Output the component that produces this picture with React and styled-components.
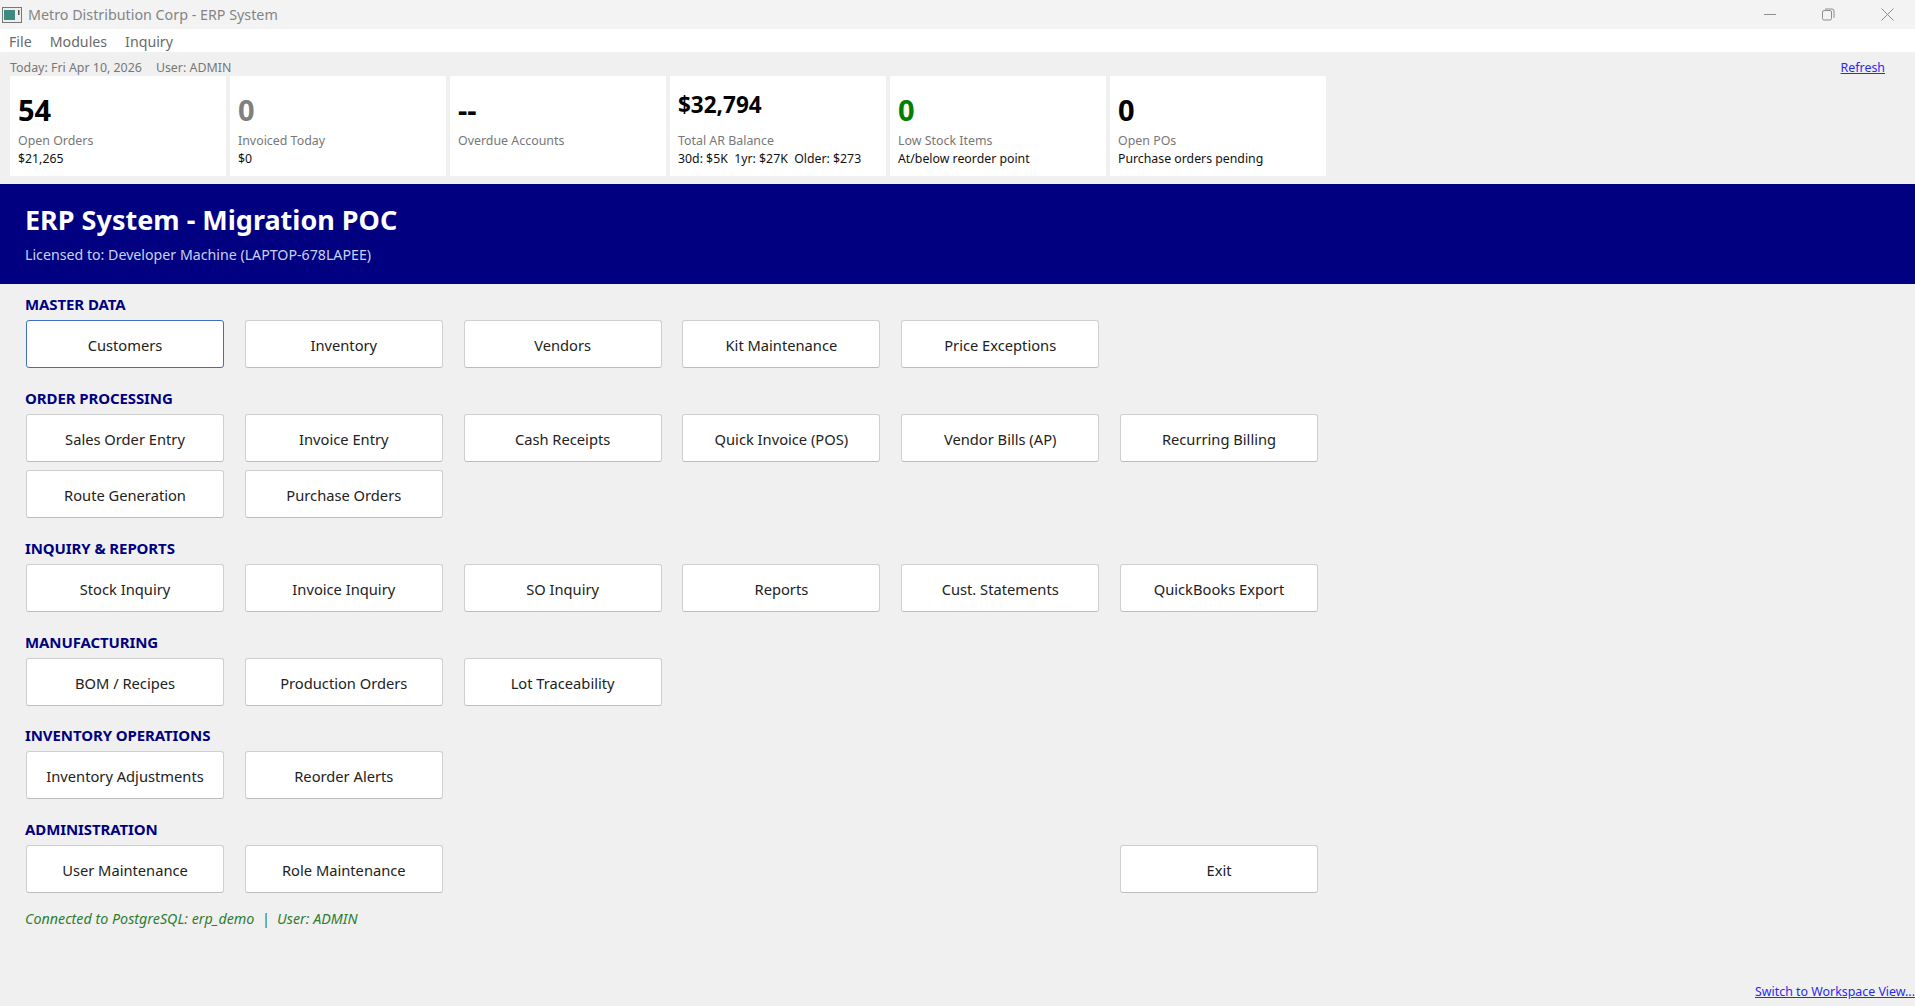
import React from 'react';
import styled, { createGlobalStyle } from 'styled-components';

const GlobalStyle = createGlobalStyle`
  html, body { margin: 0; padding: 0; background: #f0f0f0; }
  body { font-family: "Noto Sans", "Open Sans", sans-serif; overflow: hidden; }
`;

// --- window chrome ---

const Page = styled.div`
  width: 1915px;
  height: 1006px;
  display: flex;
  flex-direction: column;
  background: #f0f0f0;
`;

const TitleBar = styled.div`
  height: 29px;
  flex: none;
  display: flex;
  align-items: center;
  background: #f3f3f3;
  color: #858585;
  font-size: 14.3px;
  padding-left: 2px;
`;

const AppIcon = styled.svg`
  width: 20px;
  height: 16px;
  margin-right: 6px;
`;

const WindowTitle = styled.span`
  flex: 1;
`;

const WindowControls = styled.div`
  display: flex;
  align-items: center;
  gap: 46px;
  padding-right: 21px;
  color: #8e8e8e;
`;

const MenuBar = styled.div`
  height: 23px;
  flex: none;
  box-sizing: border-box;
  padding: 2px 0 0 9px;
  display: flex;
  align-items: center;
  gap: 18px;
  background: #fff;
  font-size: 14.2px;
  color: #6a6a6a;
`;

const InfoRow = styled.div`
  height: 24px;
  flex: none;
  box-sizing: border-box;
  display: flex;
  align-items: center;
  gap: 14px;
  padding: 7px 30px 0 10px;
  font-size: 12.4px;
  color: #777;
`;

const TextLink = styled.a`
  color: #2a2aee;
  text-decoration: underline;
  font-size: 12.4px;
`;

const RefreshLink = styled(TextLink)`
  margin-left: auto;
`;

// --- KPI cards ---

const CardRow = styled.div`
  display: flex;
  gap: 4px;
  padding-left: 10px;
  flex: none;
`;

const Card = styled.div`
  width: 216px;
  height: 100px;
  box-sizing: border-box;
  padding: 0 8px;
  background: #fff;
  display: flex;
  flex-direction: column;
`;

const CardValue = styled.div`
  height: 54px;
  flex: none;
  display: flex;
  align-items: center;
  box-sizing: border-box;
  padding-top: ${p => (p.$small ? '4px' : '12px')};
  font-size: ${p => (p.$small ? '22.5px' : '29px')};
  font-weight: 700;
  line-height: 1;
  color: ${p => p.$color || '#000'};
`;

const CardLabel = styled.div`
  font-size: 12.4px;
  line-height: 17px;
  color: #777;
  margin-top: 2px;
`;

const CardNote = styled.div`
  font-size: 12.3px;
  line-height: 18px;
  margin-top: 1px;
  color: #111;
  white-space: pre;
`;

// --- banner ---

const Banner = styled.div`
  height: 100px;
  flex: none;
  margin-top: 8px;
  box-sizing: border-box;
  padding: 17px 25px 0;
  background: #000080;
`;

const BannerTitle = styled.div`
  font-size: 27px;
  line-height: 38px;
  font-weight: 700;
  color: #fff;
`;

const BannerSub = styled.div`
  font-size: 14.2px;
  line-height: 20px;
  margin-top: 6px;
  color: #c8d2f0;
`;

// --- sections ---

const Content = styled.div`
  flex: 1;
  display: flex;
  flex-direction: column;
  padding: 10px 0 0 25px;
`;

const Section = styled.section`
  margin-bottom: 19.85px;
`;

const SectionTitle = styled.h2`
  margin: 0 0 6px;
  padding-top: 1px;
  height: 19px;
  font-size: 15px;
  line-height: 19px;
  font-weight: 700;
  letter-spacing: -0.1px;
  color: #000080;
`;

const ButtonGrid = styled.div`
  display: grid;
  grid-template-columns: repeat(6, 198px);
  column-gap: 20.8px;
  row-gap: 8px;
  padding-left: 1px;
`;

const MenuButton = styled.button`
  height: 48px;
  padding: 2px 0 0;
  box-sizing: border-box;
  font-family: inherit;
  font-size: 14.7px;
  color: #222;
  background: #fff;
  border: 1px solid ${p => (p.$focused ? '#3f6fc0' : '#cfcfcf')};
  border-bottom-color: ${p => (p.$focused ? '#3f6fc0' : '#bdbdbd')};
  border-radius: 3px;
  grid-column: ${p => p.$column || 'auto'};
`;

const StatusLine = styled.div`
  margin-top: -3.6px;
  font-size: 14.3px;
  line-height: 20px;
  font-style: italic;
  color: #2e7d32;
  white-space: pre;
`;

const FooterLink = styled.div`
  margin-top: auto;
  padding: 0 0 6px;
  text-align: right;
  line-height: 17px;
`;

const sections = [
  { title: 'MASTER DATA', buttons: ['Customers', 'Inventory', 'Vendors', 'Kit Maintenance', 'Price Exceptions'] },
  { title: 'ORDER PROCESSING', buttons: ['Sales Order Entry', 'Invoice Entry', 'Cash Receipts', 'Quick Invoice (POS)', 'Vendor Bills (AP)', 'Recurring Billing', 'Route Generation', 'Purchase Orders'] },
  { title: 'INQUIRY & REPORTS', buttons: ['Stock Inquiry', 'Invoice Inquiry', 'SO Inquiry', 'Reports', 'Cust. Statements', 'QuickBooks Export'] },
  { title: 'MANUFACTURING', buttons: ['BOM / Recipes', 'Production Orders', 'Lot Traceability'] },
  { title: 'INVENTORY OPERATIONS', buttons: ['Inventory Adjustments', 'Reorder Alerts'] },
];

const cards = [
  { value: '54', label: 'Open Orders', note: '$21,265' },
  { value: '0', color: '#808080', label: 'Invoiced Today', note: '$0' },
  { value: '--', label: 'Overdue Accounts' },
  { value: '$32,794', small: true, label: 'Total AR Balance', note: '30d: $5K  1yr: $27K  Older: $273' },
  { value: '0', color: '#008000', label: 'Low Stock Items', note: 'At/below reorder point' },
  { value: '0', label: 'Open POs', note: 'Purchase orders pending' },
];

export default function App() {
  return (
    <Page>
      <GlobalStyle />
      <TitleBar>
        <AppIcon viewBox="0 0 20 16">
          <rect x="0.5" y="0.5" width="19" height="15" fill="#eee" stroke="#777" />
          <rect x="2" y="3" width="11" height="10" fill="#3f8a80" />
          <rect x="16" y="3" width="1.5" height="5" fill="#555" />
        </AppIcon>
        <WindowTitle>Metro Distribution Corp - ERP System</WindowTitle>
        <WindowControls>
          <svg width="13" height="13" viewBox="0 0 13 13"><path d="M1 6.5h12" stroke="currentColor" fill="none" /></svg>
          <svg width="13" height="13" viewBox="0 0 13 13" fill="none" stroke="currentColor"><rect x="0.5" y="2.5" width="9" height="9.5" rx="1.5" /><path d="M3 1h7a2 2 0 0 1 2 2v7" /></svg>
          <svg width="13" height="13" viewBox="0 0 13 13" fill="none" stroke="currentColor"><path d="M0.5 0.5l12 12M12.5 0.5l-12 12" /></svg>
        </WindowControls>
      </TitleBar>
      <MenuBar>
        <span>File</span>
        <span>Modules</span>
        <span>Inquiry</span>
      </MenuBar>
      <InfoRow>
        <span>Today: Fri Apr 10, 2026</span>
        <span>User: ADMIN</span>
        <RefreshLink>Refresh</RefreshLink>
      </InfoRow>
      <CardRow>
        {cards.map(c => (
          <Card key={c.label}>
            <CardValue $small={c.small} $color={c.color}>{c.value}</CardValue>
            <CardLabel>{c.label}</CardLabel>
            {c.note && <CardNote>{c.note}</CardNote>}
          </Card>
        ))}
      </CardRow>
      <Banner>
        <BannerTitle>ERP System - Migration POC</BannerTitle>
        <BannerSub>Licensed to: Developer Machine (LAPTOP-678LAPEE)</BannerSub>
      </Banner>
      <Content>
        {sections.map(s => (
          <Section key={s.title}>
            <SectionTitle>{s.title}</SectionTitle>
            <ButtonGrid>
              {s.buttons.map(b => (
                <MenuButton key={b} $focused={b === 'Customers'}>{b}</MenuButton>
              ))}
            </ButtonGrid>
          </Section>
        ))}
        <Section>
          <SectionTitle>ADMINISTRATION</SectionTitle>
          <ButtonGrid>
            <MenuButton>User Maintenance</MenuButton>
            <MenuButton>Role Maintenance</MenuButton>
            <MenuButton $column={6}>Exit</MenuButton>
          </ButtonGrid>
        </Section>
        <StatusLine>Connected to PostgreSQL: erp_demo  |  User: ADMIN</StatusLine>
        <FooterLink><TextLink>Switch to Workspace View...</TextLink></FooterLink>
      </Content>
    </Page>
  );
}
